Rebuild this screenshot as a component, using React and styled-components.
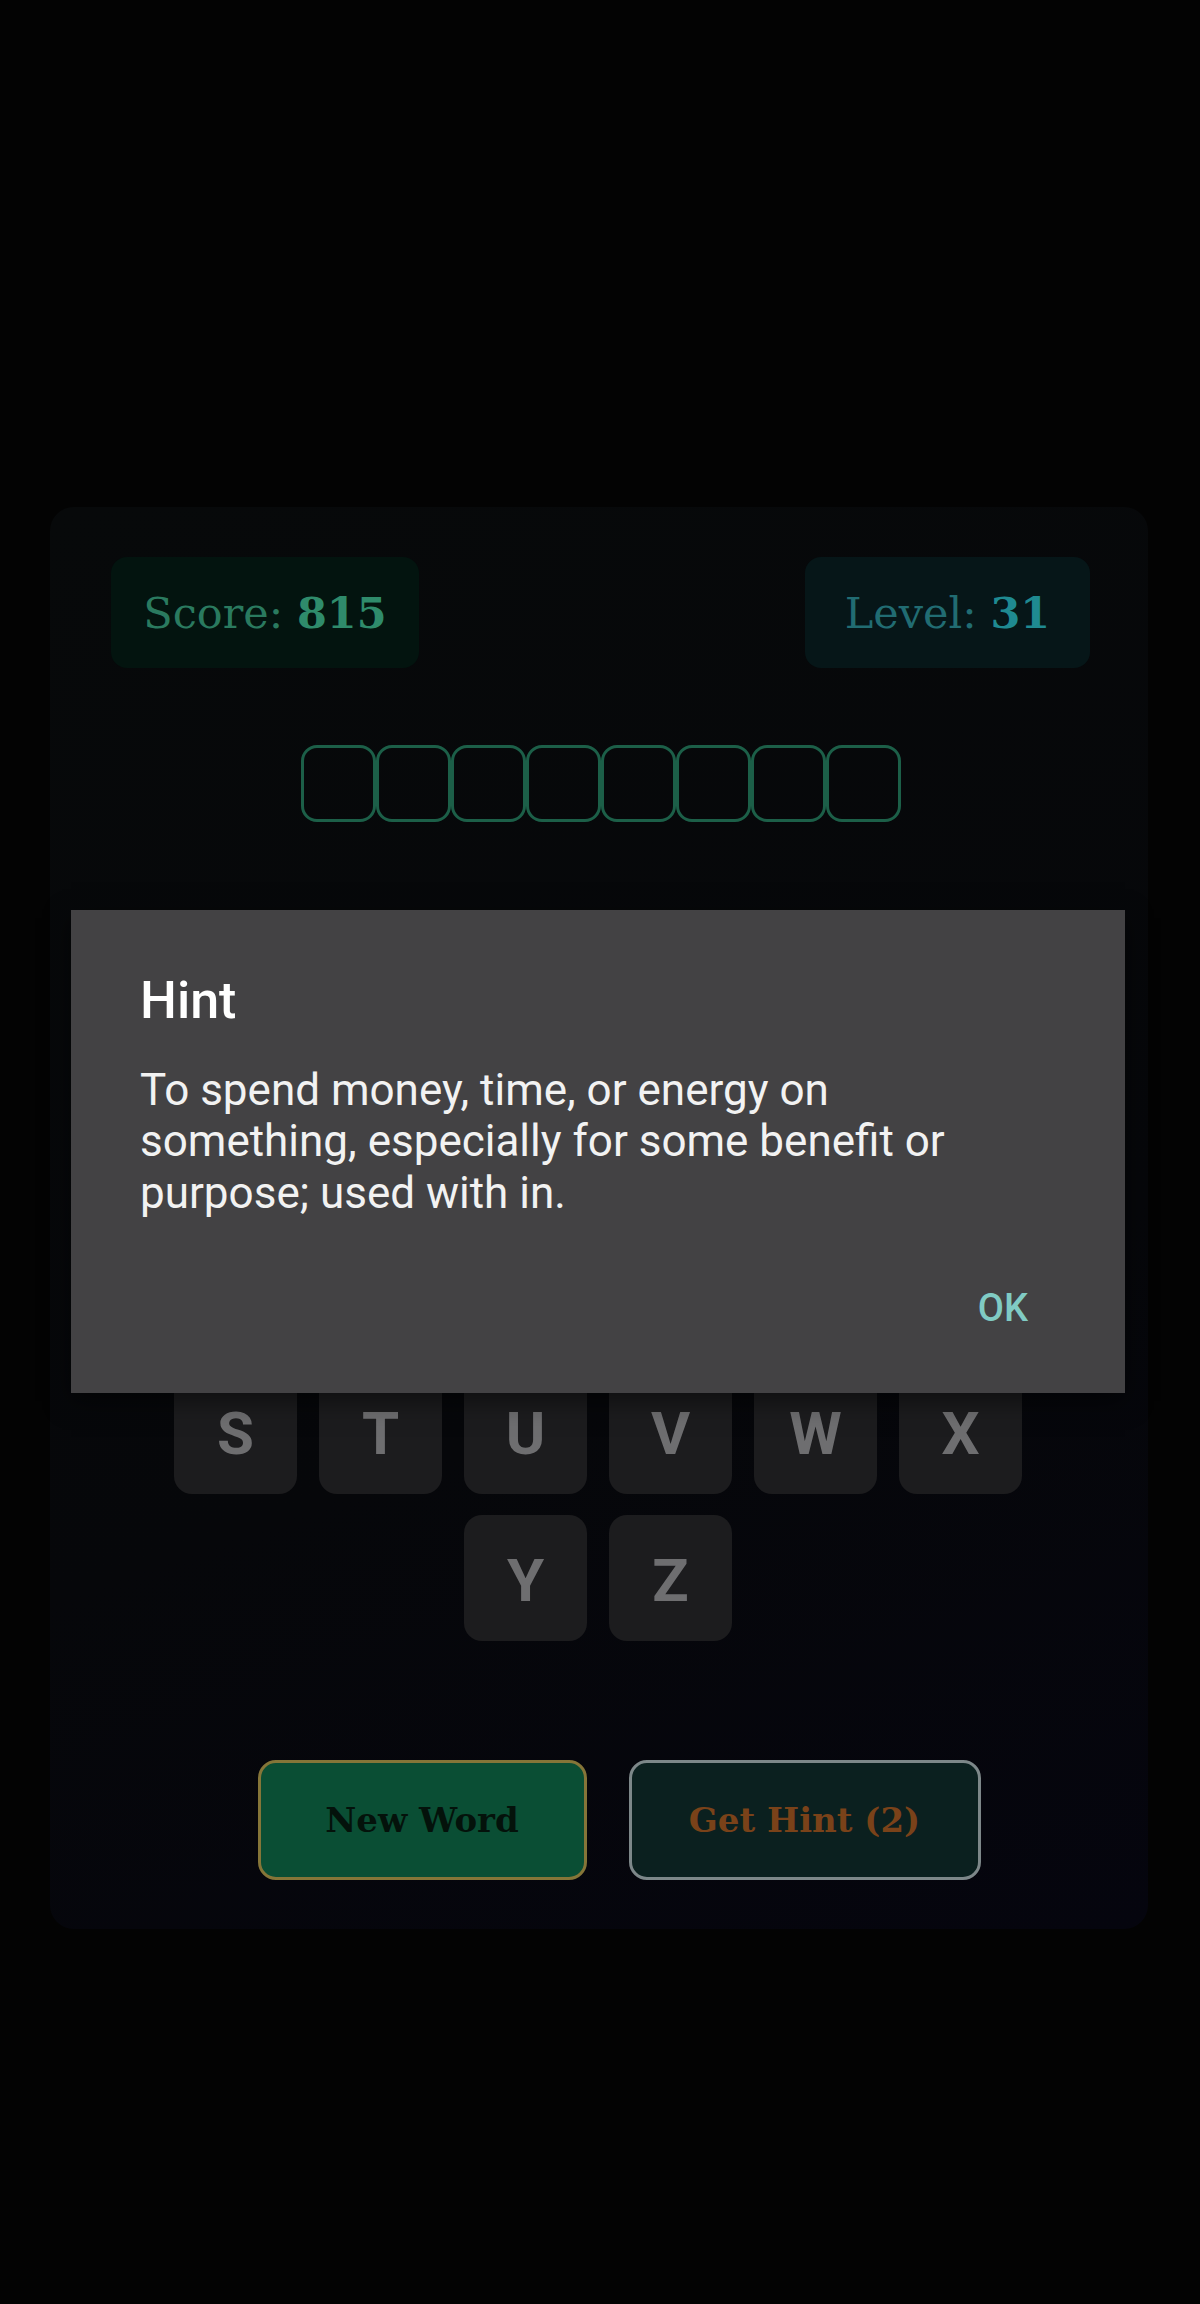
import React from 'react'
import styled, { createGlobalStyle } from 'styled-components'

const GlobalStyle = createGlobalStyle`
    html, body {
        margin: 0;
        padding: 0;
        background: #030303;
    }
    * {
        box-sizing: border-box;
    }
`;

const Screen = styled.div`
    position: relative;
    width: 1200px;
    min-height: 2304px;
    padding: 507px 52px 0 50px;
    background: #030303;
`;
const Card = styled.div`
    display: flex;
    flex-flow: column;
    align-items: center;
    width: 1098px;
    padding: 50px 58px 49px 61px;
    border-radius: 24px;
    background: linear-gradient(160deg, #07090a 0%, #06070a 60%, #05050e 100%);
`;
const StatsRow = styled.div`
    display: flex;
    justify-content: space-between;
    align-self: stretch;
`;
const Stat = styled.div`
    display: flex;
    align-items: center;
    justify-content: center;
    height: 111px;
    width: ${({w}) => w}px;
    border-radius: 16px;
    background: ${({bg}) => bg};
    color: ${({color}) => color};
    font-family: "DejaVu Serif", "Liberation Serif", serif;
    font-size: 43px;
    white-space: pre;
`;
const StatValue = styled.span`
    font-weight: 700;
    color: ${({color}) => color};
`;
const Tiles = styled.div`
    display: flex;
    margin-top: 77px;
`;
const Tile = styled.div`
    width: 75px;
    height: 77px;
    border: 3px solid #1c5f48;
    border-radius: 16px;
`;
const Keyboard = styled.div`
    display: flex;
    flex-flow: column;
    align-items: center;
    gap: 21px;
    margin-top: 105px;
    margin-left: -5px;
`;
const KeyRow = styled.div`
    display: flex;
    gap: 22px;
`;
const Key = styled.div`
    display: flex;
    align-items: center;
    justify-content: center;
    width: 123px;
    height: 126px;
    padding-top: 6px;
    border-radius: 18px;
    background: #1c1c1e;
    color: #6e6e70;
    font-family: Roboto, "Liberation Sans", sans-serif;
    font-weight: 700;
    font-size: 60px;
    line-height: 1;
`;
const Actions = styled.div`
    display: flex;
    gap: 42px;
    margin-top: 119px;
    padding-left: 37px;
`;
const ActionButton = styled.div`
    display: flex;
    align-items: center;
    justify-content: center;
    width: ${({w}) => w}px;
    height: 120px;
    border: 3px solid ${({border}) => border};
    border-radius: 18px;
    background: ${({bg}) => bg};
    color: ${({color}) => color};
    font-family: "DejaVu Serif", "Liberation Serif", serif;
    font-weight: 700;
    font-size: 34px;
`;

const Dialog = styled.div`
    position: absolute;
    left: 71px;
    top: 910px;
    width: 1054px;
    padding: 61px 69px 62px 69px;
    background: #434244;
    font-family: Roboto, "Liberation Sans", sans-serif;
    box-shadow: 0 8px 24px rgba(0, 0, 0, 0.5);
`;
const DialogTitle = styled.div`
    color: #ffffff;
    font-size: 52px;
    font-weight: 500;
    line-height: 1.17;
`;
const DialogMessage = styled.div`
    margin-top: 33px;
    color: #f2f2f2;
    font-size: 44px;
    line-height: 1.17;
`;
const DialogButtons = styled.div`
    display: flex;
    justify-content: flex-end;
    margin-top: 67px;
    padding-right: 28px;
`;
const OkButton = styled.div`
    color: #80cbc4;
    font-size: 38px;
    font-weight: 500;
    line-height: 1.17;
`;

const rows = ['ABCDEF', 'GHIJKL', 'MNOPQR', 'STUVWX', 'YZ']

const App = () => {
    return (
        <Screen>
            <GlobalStyle />
            <Card>
                <StatsRow>
                    <Stat w={308} bg="#03140f" color="#2a7a5f">
                        Score: <StatValue color="#2f8b6b">815</StatValue>
                    </Stat>
                    <Stat w={285} bg="#061618" color="#216c72">
                        Level: <StatValue color="#1f8a91">31</StatValue>
                    </Stat>
                </StatsRow>
                <Tiles>
                    {Array.from({length: 8}).map((_, i) => <Tile key={i} />)}
                </Tiles>
                <Keyboard>
                    {rows.map(row => (
                        <KeyRow key={row}>
                            {row.split('').map(letter => <Key key={letter}>{letter}</Key>)}
                        </KeyRow>
                    ))}
                </Keyboard>
                <Actions>
                    <ActionButton w={329} bg="#0a4e34" border="#857538" color="#04120b">New Word</ActionButton>
                    <ActionButton w={352} bg="#0b201f" border="#7d8789" color="#7a4219">Get Hint (2)</ActionButton>
                </Actions>
            </Card>
            <Dialog>
                <DialogTitle>Hint</DialogTitle>
                <DialogMessage>
                    To spend money, time, or energy on something, especially for some benefit or purpose; used with in.
                </DialogMessage>
                <DialogButtons>
                    <OkButton>OK</OkButton>
                </DialogButtons>
            </Dialog>
        </Screen>
    )
}

export default App
